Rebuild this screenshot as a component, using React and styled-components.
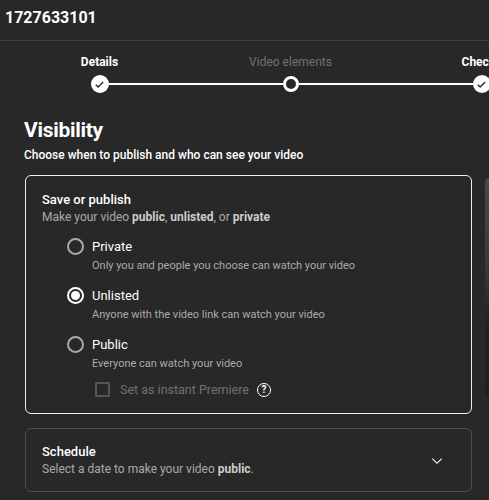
import React from "react";
import styled, { createGlobalStyle } from "styled-components";

const GlobalStyle = createGlobalStyle`
  html, body {
    margin: 0;
    padding: 0;
    background: #282828;
    overflow: hidden;
  }
  body {
    font-family: Roboto, "Liberation Sans", Arial, sans-serif;
    color: #fff;
  }
`;

const steps = [
  { label: "Details", state: "done" },
  { label: "Video elements", state: "current" },
  { label: "Checks", state: "done" },
  { label: "Visibility", state: "todo" },
];

const options = [
  { id: "private", label: "Private", desc: "Only you and people you choose can watch your video" },
  { id: "unlisted", label: "Unlisted", desc: "Anyone with the video link can watch your video" },
  { id: "public", label: "Public", desc: "Everyone can watch your video" },
];

const CheckMark = () => (
  <svg width="11" height="11" viewBox="0 0 24 24">
    <path d="M4 12.5l5 5L20 6.5" fill="none" stroke="#282828" strokeWidth="3" />
  </svg>
);

const App = () => {
  return (
    <Page>
      <GlobalStyle />
      <Header>1727633101</Header>
      <Stepper>
        {steps.map((s, i) => (
          <Step key={s.label}>
            <StepLabel $state={s.state}>{s.label}</StepLabel>
            <Track>
              <Line $hidden={i === 0} />
              <Dot $state={s.state}>{s.state === "done" && <CheckMark />}</Dot>
              <Line $hidden={i === steps.length - 1} />
            </Track>
          </Step>
        ))}
      </Stepper>

      <Body>
        <Main>
          <Heading>Visibility</Heading>
          <SubHeading>Choose when to publish and who can see your video</SubHeading>

          <Card $active>
            <CardTitle>Save or publish</CardTitle>
            <CardText>
              Make your video <b>public</b>, <b>unlisted</b>, or <b>private</b>
            </CardText>
            <Options>
              {options.map((o) => (
                <Option key={o.id}>
                  <Radio $checked={o.id === "unlisted"} />
                  <OptionBody>
                    <OptionLabel>{o.label}</OptionLabel>
                    <OptionDesc>{o.desc}</OptionDesc>
                  </OptionBody>
                </Option>
              ))}
              <Premiere>
                <CheckBox />
                <PremiereLabel>Set as instant Premiere</PremiereLabel>
                <HelpIcon>?</HelpIcon>
              </Premiere>
            </Options>
          </Card>

          <Card>
            <CardRow>
              <div>
                <CardTitle>Schedule</CardTitle>
                <CardText>
                  Select a date to make your video <b>public</b>.
                </CardText>
              </div>
              <svg width="16" height="16" viewBox="0 0 24 24">
                <path d="M5 8.5l7 7 7-7" fill="none" stroke="#fff" strokeWidth="1.6" />
              </svg>
            </CardRow>
          </Card>
        </Main>
        <SidePanel />
      </Body>
    </Page>
  );
};

export default App;

const Page = styled.div`
  width: 489px;
  height: 500px;
  overflow: hidden;
  background: #282828;
`;

const Header = styled.div`
  height: 41px;
  box-sizing: border-box;
  padding: 0 5px 6px;
  display: flex;
  align-items: center;
  font-size: 16px;
  font-weight: 700;
  border-bottom: 1px solid #3e3e3e;
`;

const Stepper = styled.div`
  display: flex;
  padding-left: 4px;
  padding-top: 13px;
  width: 1000px;
`;

const Step = styled.div`
  width: 191px;
  flex-shrink: 0;
  display: flex;
  flex-direction: column;
  align-items: center;
`;

const StepLabel = styled.div`
  font-size: 12px;
  font-weight: ${(p) => (p.$state === "current" ? 400 : 700)};
  color: ${(p) => (p.$state === "current" ? "#717171" : "#fff")};
  line-height: 16px;
  height: 16px;
`;

const Track = styled.div`
  width: 100%;
  display: flex;
  align-items: center;
  margin-top: 3px;
  height: 22px;
`;

const Line = styled.div`
  flex: 1;
  height: 2px;
  background: ${(p) => (p.$hidden ? "transparent" : "#fff")};
`;

const Dot = styled.div`
  width: ${(p) => (p.$state === "current" ? "10px" : "18px")};
  height: ${(p) => (p.$state === "current" ? "10px" : "18px")};
  border-radius: 50%;
  flex-shrink: 0;
  display: flex;
  align-items: center;
  justify-content: center;
  background: ${(p) => (p.$state === "current" ? "#282828" : "#fff")};
  border: ${(p) => (p.$state === "current" ? "3px solid #fff" : "none")};
`;

const Body = styled.div`
  display: flex;
  gap: 13px;
  padding-left: 25px;
`;

const Main = styled.div`
  width: 447px;
  flex-shrink: 0;
  padding-top: 20px;
`;

const Heading = styled.h1`
  margin: 0 0 0 -1px;
  font-size: 21px;
  font-weight: 700;
  line-height: 30px;
  letter-spacing: -0.3px;
`;

const SubHeading = styled.p`
  margin: 1px 0 0 -1px;
  font-size: 12px;
  font-weight: 500;
  line-height: 18px;
`;

const Card = styled.div`
  margin-top: ${(p) => (p.$active ? "11px" : "14px")};
  border: ${(p) => (p.$active ? "1.5px solid #f1f1f1" : "1px solid #4d4d4d")};
  border-radius: 6px;
  padding: ${(p) => (p.$active ? "15px 16px 16px" : "13px 16px 13px")};
  box-sizing: border-box;
`;

const CardRow = styled.div`
  display: flex;
  align-items: center;
  justify-content: space-between;
  padding-right: 10px;
  padding-top: 1px;
`;

const CardTitle = styled.div`
  font-size: 13px;
  font-weight: 500;
  line-height: 18px;
`;

const CardText = styled.div`
  font-size: 12px;
  color: #aaa;
  line-height: 17px;
  b {
    color: #ccc;
    font-weight: 700;
  }
`;

const Options = styled.div`
  padding-left: 25px;
  margin-top: 11px;
`;

const Option = styled.div`
  display: flex;
  align-items: flex-start;
  gap: 8px;
  margin-bottom: 12px;
`;

const Radio = styled.div`
  width: 17px;
  height: 17px;
  box-sizing: border-box;
  border-radius: 50%;
  border: 2px solid ${(p) => (p.$checked ? "#fff" : "#aaa")};
  display: flex;
  align-items: center;
  justify-content: center;
  margin-top: 1px;
  &::after {
    content: "";
    width: 9px;
    height: 9px;
    border-radius: 50%;
    background: ${(p) => (p.$checked ? "#fff" : "transparent")};
  }
`;

const OptionBody = styled.div`
  display: flex;
  flex-direction: column;
  gap: 2px;
`;

const OptionLabel = styled.div`
  font-size: 13px;
  line-height: 19px;
`;

const OptionDesc = styled.div`
  font-size: 11px;
  color: #aaa;
  line-height: 16px;
`;

const Premiere = styled.div`
  display: flex;
  align-items: center;
  padding-left: 28px;
  margin-top: -2px;
`;

const CheckBox = styled.div`
  width: 15px;
  height: 15px;
  box-sizing: border-box;
  border: 2px solid #555;
  border-radius: 1px;
`;

const PremiereLabel = styled.span`
  font-size: 12.5px;
  color: #717171;
  margin-left: 10px;
`;

const HelpIcon = styled.span`
  margin-left: 8px;
  width: 14px;
  height: 14px;
  box-sizing: border-box;
  border-radius: 50%;
  border: 1.5px solid #fff;
  display: flex;
  align-items: center;
  justify-content: center;
  font-size: 10px;
  font-weight: 700;
  color: #fff;
`;

const SidePanel = styled.div`
  margin-top: 83px;
  width: 60px;
  height: 218px;
  flex-shrink: 0;
  border-radius: 4px;
  background: linear-gradient(#484848 0%, #3a3a3a 40%, #202020 70%, #1f1f1f 100%);
`;
